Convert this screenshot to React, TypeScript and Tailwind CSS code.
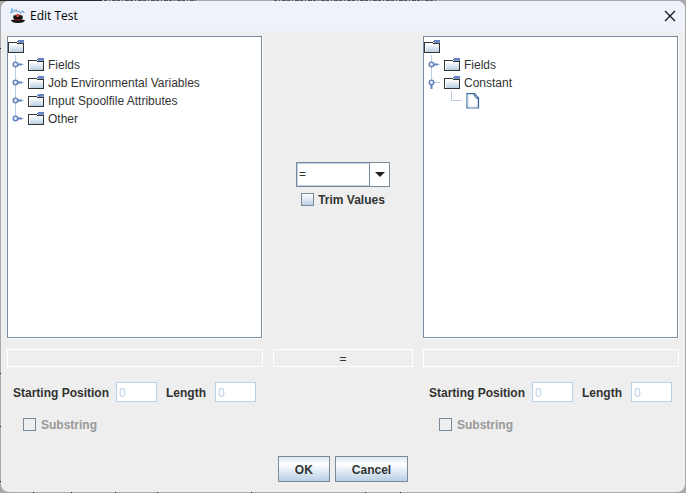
import { useState } from "react";

type Node = { label: string; open?: boolean; children?: Node[] };

const sourceTree: Node[] = [
  { label: "Fields" },
  { label: "Job Environmental Variables" },
  { label: "Input Spoolfile Attributes" },
  { label: "Other" },
];

const targetTree: Node[] = [
  { label: "Fields" },
  { label: "Constant", open: true, children: [{ label: "" }] },
];

// Magic hat with the small "JMagic" lettering above it
function AppIcon() {
  return (
    <svg className="w-4 h-4" viewBox="0 0 16 16" aria-hidden="true">
      <path d="M2 .5v3q-.2 1.200-1.700 1" fill="none" stroke="#2f8fe0" strokeWidth="1.200" />
      <path d="M3.500 4.500 4.300 1.500l1 2 1-2 .7 3M8 4q0-1.300 1.300-1v2M11 3v2q0 1-1.300 1M12.300 2.500v2M13.500 3v1.500h1" fill="none" stroke="#7fa9d4" strokeWidth="1" />
      <path d="M3 7.500h10l-1 5.500H4z" fill="#111" />
      <ellipse cx="8" cy="7.500" rx="5" ry="1.500" fill="#d9d5d2" />
      <ellipse cx="8" cy="8.200" rx="4.500" ry="1.300" fill="#1b1a1b" />
      <path d="M6.500 6h2.500v3H6.500z" fill="#e0443e" />
      <path d="M4.500 11q3.500 1.200 7 0v1q-3.500 1.200-7 0z" fill="#a8252d" />
      <path d="M1 12q1.500-.8 3 .3 4 1.200 8 0 1.500-1.100 3-.3-.5 3-7 3T1 12z" fill="#111" />
    </svg>
  );
}

function FolderIcon() {
  return (
    <svg className="w-4 h-4 shrink-0" viewBox="0 0 16 16" shapeRendering="crispEdges" aria-hidden="true">
      <defs>
        <linearGradient id="folder" x1="0" y1="0" x2="0" y2="1">
          <stop offset="0" stopColor="#fff" />
          <stop offset="1" stopColor="#b8cfe5" />
        </linearGradient>
      </defs>
      <path d="M0 4h9v1h7v10H0z" fill="#333" />
      <path d="M10 2h6v2H9V3h1z" fill="#6382bf" />
      <path d="M10 4h6v1h-6z" fill="#7f9acc" />
      <path d="M1 5h8v1h6v8H1z" fill="#fff" />
      <path d="M2 6h13v8H2z" fill="url(#folder)" />
    </svg>
  );
}

function FileIcon() {
  return (
    <svg className="w-4 h-[18px] shrink-0" viewBox="0 0 16 18" aria-hidden="true">
      <path d="M2 2.500h7.500l4 4.500v10H2z" fill="#fff" stroke="#36649b" strokeWidth="1.200" />
      <path d="M3 16V3.500h5.500M3 16h9.500V8" fill="none" stroke="#c8daec" />
      <path d="M9 3l.5 2 1.500 2 2.500 1" fill="none" stroke="#36649b" />
    </svg>
  );
}

function Handle({ open, last }: { open?: boolean; last: boolean }) {
  return (
    <svg className="w-5 h-[18px] shrink-0" viewBox="0 0 20 18" aria-hidden="true">
      <path d={last ? "M7.500 0v9" : "M7.500 0v18"} stroke="#b8cfe5" />
      <path d="M8 9.500h8" stroke="#b8cfe5" />
      {open ? (
        <path d="M7.500 11v5" stroke="#6382bf" strokeWidth="2" />
      ) : (
        <path d="M9 9.500h5" stroke="#6382bf" strokeWidth="2" />
      )}
      <circle cx="7.500" cy="9.500" r="2.200" fill="#fff" stroke="#6382bf" strokeWidth="1.600" />
    </svg>
  );
}

function Tree({ nodes, label }: { nodes: Node[]; label: string }) {
  return (
    <div className="border-r border-b border-white">
      <ul aria-label={label} className="h-full bg-white border border-[#7a8a99]">
        <li className="flex h-[18px] items-center"><FolderIcon /></li>
        {nodes.map((node, i) => (
          <li key={node.label}>
            <div className="flex h-[18px] items-center">
              <Handle open={node.open} last={i === nodes.length - 1} />
              <FolderIcon />
              <span className="ml-1 pt-[2px] whitespace-nowrap">{node.label}</span>
            </div>
            {node.children?.map((child, j) => (
              <div key={j} className="flex h-[18px] items-center pl-[27px]">
                <svg className="w-[14px] h-[18px]" viewBox="0 0 14 18" aria-hidden="true">
                  <path d="M.5 0v9.500h10" fill="none" stroke="#b8cfe5" />
                </svg>
                <FileIcon />
                <span>{child.label}</span>
              </div>
            ))}
          </li>
        ))}
      </ul>
    </div>
  );
}

function SubstringOptions({ id }: { id: string }) {
  return (
    <div className="pt-[5px] pl-[6px] font-bold">
      <div className="flex items-center gap-[9px]">
        <label htmlFor={`${id}-start`} className="pt-[2px] -mr-[2px] whitespace-nowrap">Starting Position</label>
        <input
          id={`${id}-start`}
          disabled
          defaultValue="0"
          className="w-[41px] h-5 px-[2px] pt-px bg-white border border-[#b8cfe5] text-[#b8cfe5] font-normal"
        />
        <label htmlFor={`${id}-length`} className="pt-[2px]">Length</label>
        <input
          id={`${id}-length`}
          disabled
          defaultValue="0"
          className="w-[41px] h-5 px-[2px] pt-px bg-white border border-[#b8cfe5] text-[#b8cfe5] font-normal"
        />
      </div>
      <label className="mt-[15px] ml-[10px] flex items-center gap-[5px] text-[#999]">
        <input type="checkbox" disabled className="appearance-none w-[13px] h-[13px] border border-[#7a8a99]" />
        <span className="pt-px">Substring</span>
      </label>
    </div>
  );
}

export default function App() {
  const [operator, setOperator] = useState("=");
  const [trim, setTrim] = useState(false);

  return (
    <div className="relative min-h-screen flex flex-col p-px bg-[#a9a9a9] font-['Liberation_Sans',Arial,sans-serif] text-[12px] leading-[14px] text-[#333]">
      {/* Edges of the window behind the dialog */}
      <svg className="absolute inset-0 w-full h-full" aria-hidden="true">
        <path d="M0 .5h102" stroke="#2b2427" />
        <path d="M104 .5h92M274 .5h164" stroke="#555" strokeDasharray="3 2 1 2 4 1" />
        <path d="M0 48.500h1M0 373.500h1M0 426.500h1M0 481.500h1M33 492.500h1M71 492.500h1M115 492.500h1M157 492.500h1M251 492.500h1M365 492.500h1M400 492.500h1" stroke="#222" />
      </svg>

      <main className="relative flex-1 flex flex-col rounded-lg overflow-hidden bg-[#eee]">
        <header className="flex h-[30px] items-center pl-[9px] pr-[9px] bg-[#eff2fa] text-black">
          <AppIcon />
          <h1 className="ml-1 flex-1 font-['Open_Sans','Noto_Sans',sans-serif] text-[12px]">Edit Test</h1>
          <button aria-label="Close">
            <svg className="w-3 h-3" viewBox="0 0 12 12" aria-hidden="true">
              <path d="M1 1l10 10M11 1L1 11" stroke="#111" strokeWidth="1.200" />
            </svg>
          </button>
        </header>

        <div className="flex-1 grid grid-cols-[256fr_140fr_256fr] grid-rows-[1fr_18px_auto] gap-[10px] px-[6px] pt-[5px]">
          <Tree nodes={sourceTree} label="Source" />
          <div className="flex flex-col items-center justify-center pb-[7px]">
            <div className="relative">
              <select
                aria-label="Operator"
                value={operator}
                onChange={(e) => setOperator(e.target.value)}
                className="block appearance-none w-[94px] h-[25px] pl-[2px] bg-white border border-[#7a8a99] outline-none"
              >
                <option>=</option>
                <option>&lt;</option>
                <option>&gt;</option>
              </select>
              <span className="pointer-events-none absolute top-px bottom-px left-px right-5 border border-[#b8cfe5]" />
              <span className="pointer-events-none absolute inset-y-0 right-0 flex w-[21px] items-center justify-center border border-[#7a8a99]">
                <svg className="w-[10px] h-[5px]" viewBox="0 0 10 5" aria-hidden="true">
                  <path d="M0 0h10L5 5z" fill="#222" />
                </svg>
              </span>
            </div>
            <label className="mt-[5px] flex items-center gap-1 font-bold">
              <input
                type="checkbox"
                checked={trim}
                onChange={(e) => setTrim(e.target.checked)}
                className="appearance-none w-[13px] h-[13px] border border-[#7a8a99] bg-linear-to-b from-white to-[#b8cfe5] checked:from-[#6382bf]"
              />
              <span className="pt-px">Trim Values</span>
            </label>
          </div>
          <Tree nodes={targetTree} label="Target" />

          <output className="border border-white" />
          <output className="flex items-center justify-center pt-px border border-white">{operator}</output>
          <output className="border border-white" />

          <SubstringOptions id="source" />
          <div />
          <SubstringOptions id="target" />
        </div>

        <footer className="flex justify-center gap-[5px] pt-6 pb-[10px]">
          <button className="h-[26px] px-4 pt-px border border-[#7a8a99] bg-linear-to-b from-[#dde8f3] via-white via-30% to-[#b8cfe5] font-bold">OK</button>
          <button className="h-[26px] px-4 pt-px border border-[#7a8a99] bg-linear-to-b from-[#dde8f3] via-white via-30% to-[#b8cfe5] font-bold">Cancel</button>
        </footer>
      </main>
    </div>
  );
}
